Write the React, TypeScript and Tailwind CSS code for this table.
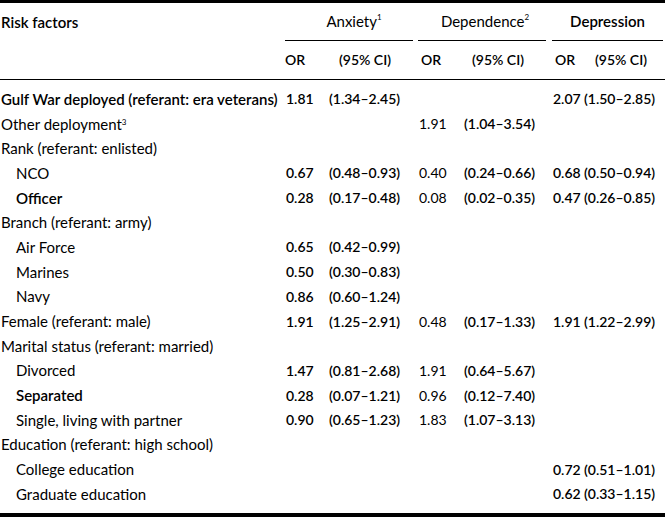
import React from "react";

type Row = {
  label: string;
  sup?: string;
  indent?: boolean;
  bold?: boolean;
  a?: [string, string];
  d?: [string, string];
  p?: [string, string];
};

const rows: Row[] = [
  { label: "Gulf War deployed (referant: era veterans)", bold: true, a: ["1.81", "(1.34–2.45)"], p: ["2.07", "(1.50–2.85)"] },
  { label: "Other deployment", sup: "3", d: ["1.91", "(1.04–3.54)"] },
  { label: "Rank (referant: enlisted)" },
  { label: "NCO", indent: true, a: ["0.67", "(0.48–0.93)"], d: ["0.40", "(0.24–0.66)"], p: ["0.68", "(0.50–0.94)"] },
  { label: "Officer", indent: true, bold: true, a: ["0.28", "(0.17–0.48)"], d: ["0.08", "(0.02–0.35)"], p: ["0.47", "(0.26–0.85)"] },
  { label: "Branch (referant: army)" },
  { label: "Air Force", indent: true, a: ["0.65", "(0.42–0.99)"] },
  { label: "Marines", indent: true, a: ["0.50", "(0.30–0.83)"] },
  { label: "Navy", indent: true, a: ["0.86", "(0.60–1.24)"] },
  { label: "Female (referant: male)", a: ["1.91", "(1.25–2.91)"], d: ["0.48", "(0.17–1.33)"], p: ["1.91", "(1.22–2.99)"] },
  { label: "Marital status (referant: married)" },
  { label: "Divorced", indent: true, a: ["1.47", "(0.81–2.68)"], d: ["1.91", "(0.64–5.67)"] },
  { label: "Separated", indent: true, bold: true, a: ["0.28", "(0.07–1.21)"], d: ["0.96", "(0.12–7.40)"] },
  { label: "Single, living with partner", indent: true, a: ["0.90", "(0.65–1.23)"], d: ["1.83", "(1.07–3.13)"] },
  { label: "Education (referant: high school)" },
  { label: "College education", indent: true, p: ["0.72", "(0.51–1.01)"] },
  { label: "Graduate education", indent: true, p: ["0.62", "(0.33–1.15)"] },
];

const cols = "grid grid-cols-[285px_46px_87px_46px_88px_32px_79px]";

const App = () => {
  return (
    <main className="w-[665px] h-[517px] bg-white text-black text-[14px] leading-none font-['Lato','Liberation_Sans',sans-serif] flex flex-col">
      <div className="h-[3px] bg-black" />

      {/* header */}
      <div className={`${cols} h-[38px] items-stretch text-[15px]`}>
        <div className="pl-px flex items-center font-semibold">Risk factors</div>
        <div className="col-span-2 mr-[5px] border-b border-black flex items-center justify-center pl-[10px]">
          Anxiety<sup className="text-[8px] -top-[5px]">1</sup>
        </div>
        <div className="col-span-2 mr-[6px] border-b border-black flex items-center justify-center pl-[6px]">
          Dependence<sup className="text-[8px] -top-[5px]">2</sup>
        </div>
        <div className="col-span-2 border-b border-black flex items-center justify-center font-semibold">Depression</div>
      </div>
      <div className={`${cols} h-[39px] items-center border-b border-black font-semibold`}>
        <div />
        <div>OR</div>
        <div className="pl-[8px]">(95% CI)</div>
        <div className="pl-[3px]">OR</div>
        <div className="pl-[8px]">(95% CI)</div>
        <div className="pl-[3px]">OR</div>
        <div className="pl-[11px]">(95% CI)</div>
      </div>

      {/* body */}
      <div className="flex-1 pt-[7px] flex flex-col">
        {rows.map((r) => (
          <div key={r.label} className={`${cols} h-[24.7px] items-center`}>
            <div className={`text-[15px] ${r.indent ? "pl-[16px]" : "pl-px"} ${r.bold ? "font-semibold" : ""}`}>
              {r.label}
              {r.sup && <sup className="text-[8px] -top-[5px]">{r.sup}</sup>}
            </div>
            <div className="pl-px font-semibold">{r.a?.[0]}</div>
            <div className="-ml-[2px] font-semibold">{r.a?.[1]}</div>
            <div className="pl-px">{r.d?.[0]}</div>
            <div className="font-semibold">{r.d?.[1]}</div>
            <div className="pl-px font-semibold">{r.p?.[0]}</div>
            <div className="font-semibold">{r.p?.[1]}</div>
          </div>
        ))}
      </div>

      <div className="h-[4px] bg-black" />
    </main>
  );
};

export default App;
